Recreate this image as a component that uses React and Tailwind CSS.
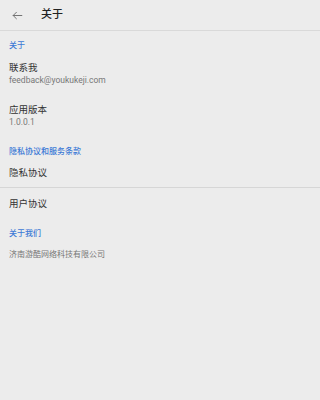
const font = { fontFamily: 'Roboto, "Noto Sans CJK SC", sans-serif' };

function SectionTitle({ children, className = "" }) {
  return <div className={`px-[9px] text-[8px] leading-[12px] font-medium text-[#3d7ad6] ${className}`}>{children}</div>;
}

export default function App() {
  return (
    <div className="min-h-screen w-full bg-[#ececec]" style={font}>
      <div className="flex h-[31px] items-center border-b border-[#d9d9d9]">
        <div className="flex w-[33px] justify-center pl-[1px]">
          <svg width="13" height="13" viewBox="0 0 24 24" fill="none" stroke="#707070" strokeWidth="1.8" strokeLinecap="round" strokeLinejoin="round">
            <path d="M20 12H4" />
            <path d="M10 6l-6 6 6 6" />
          </svg>
        </div>
        <div className="pl-[8px] text-[11px] font-medium text-[#222]">关于</div>
      </div>

      <SectionTitle className="mt-[9px]">关于</SectionTitle>
      <div className="px-[9px] pt-[9px]">
        <div className="text-[9.5px] leading-[13px] text-[#333]">联系我</div>
        <div className="text-[8.5px] leading-[12px] text-[#777]">feedback@youkukeji.com</div>
      </div>
      <div className="px-[9px] pt-[17px]">
        <div className="text-[9.5px] leading-[13px] text-[#333]">应用版本</div>
        <div className="text-[8.5px] leading-[12px] text-[#777]">1.0.0.1</div>
      </div>

      <SectionTitle className="mt-[18px]">隐私协议和服务条款</SectionTitle>
      <div className="flex h-[30px] items-center border-b border-[#d6d6d6] px-[9px] pt-[1px] text-[9.5px] text-[#333]">隐私协议</div>
      <div className="flex h-[32px] items-center px-[9px] text-[9.5px] text-[#333]">用户协议</div>

      <SectionTitle className="mt-[8px]">关于我们</SectionTitle>
      <div className="px-[9px] pt-[9px] text-[8px] leading-[12px] text-[#777]">济南游酷网络科技有限公司</div>
    </div>
  );
}
